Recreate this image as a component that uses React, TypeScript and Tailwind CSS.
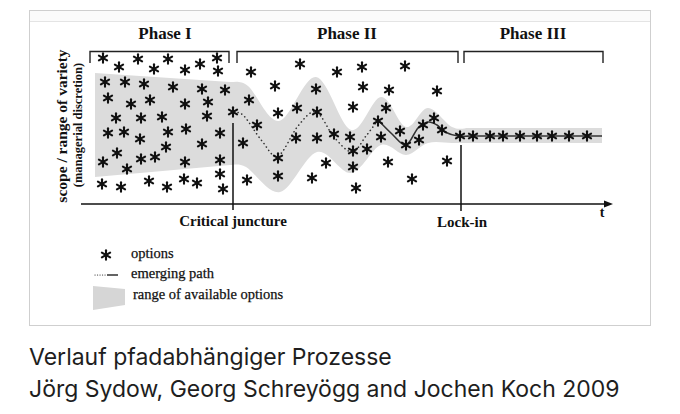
type Pt = [number, number]

// options (asterisks) scattered over the chart
const stars: Pt[] = [
  [103, 58], [119, 67], [138, 59], [154, 69], [168, 59], [185, 70], [200, 64], [217, 58], [218, 71],
  [105, 82], [125, 82], [144, 84], [173, 87], [202, 89], [225, 90],
  [108, 98], [131, 104], [150, 100], [185, 104], [208, 102],
  [116, 118], [141, 118], [162, 117], [207, 116], [233, 112],
  [108, 133], [124, 132], [140, 139], [168, 132], [186, 129], [220, 133],
  [166, 147], [202, 144],
  [117, 153], [103, 162], [127, 169], [141, 159], [155, 157], [185, 162], [220, 160],
  [220, 174],
  [102, 184], [121, 187], [149, 181], [167, 187], [184, 179], [197, 183], [223, 189],
  [251, 72], [300, 64], [337, 72], [362, 67], [405, 66],
  [275, 86], [316, 89], [363, 87], [389, 90], [437, 91],
  [249, 100], [278, 113], [297, 108], [317, 112], [353, 107], [386, 108],
  [257, 125], [378, 121], [434, 118], [423, 125], [442, 130],
  [243, 143], [296, 138], [317, 138], [334, 134], [350, 137], [381, 137], [400, 131], [406, 145], [419, 140],
  [278, 158], [326, 163], [353, 151], [367, 149], [388, 162], [353, 167], [447, 161],
  [247, 180], [278, 176], [312, 178], [356, 188], [412, 179],
  [460, 136], [473, 136], [490, 136], [503, 136], [520, 136], [537, 136], [552, 136], [569, 136], [587, 136],
]

const bandTop: Pt[] = [[230, 82], [248, 86], [279, 121], [316, 77], [351, 130], [381, 97], [406, 127], [428, 108], [452, 127], [468, 128]]
const bandBottom: Pt[] = [[468, 143], [452, 143], [428, 143], [406, 155], [381, 145], [351, 173], [317, 152], [280, 192], [246, 167], [230, 165]]
const dotted: Pt[] = [[234, 112], [244, 116], [262, 141], [278, 156], [298, 126], [316, 112], [334, 137], [352, 152], [366, 136], [378, 120]]
const solid: Pt[] = [[378, 120], [392, 134], [406, 145], [418, 128], [428, 122], [437, 125], [445, 132], [458, 136], [470, 136]]

// catmull-rom through the points, returns curve commands only
function curve(pts: Pt[]) {
  let d = ""
  for (let i = 0; i < pts.length - 1; i++) {
    const p0 = pts[i - 1] || pts[i]
    const p1 = pts[i]
    const p2 = pts[i + 1]
    const p3 = pts[i + 2] || p2
    const c1 = [p1[0] + (p2[0] - p0[0]) / 6, p1[1] + (p2[1] - p0[1]) / 6]
    const c2 = [p2[0] - (p3[0] - p1[0]) / 6, p2[1] - (p3[1] - p1[1]) / 6]
    d += ` C${c1[0]},${c1[1]} ${c2[0]},${c2[1]} ${p2[0]},${p2[1]}`
  }
  return d
}

const bandPath =
  `M95,73 L230,82` + curve(bandTop) + ` L602,128 L602,143 L468,143` + curve(bandBottom) + ` L95,177 Z`

function Star({ x, y }: { x: number; y: number }) {
  return <use href="#ast" x={x} y={y} />
}

const serif = "'Liberation Serif', 'Times New Roman', serif"

function Chart() {
  return (
    <svg width="620" height="303" viewBox="30 22 620 303" className="block">
      <defs>
        <g id="ast" stroke="#111" strokeWidth="2.1" strokeLinecap="round">
          <line x1="0" y1="-4.7" x2="0" y2="4.7" />
          <line x1="-4.1" y1="-2.35" x2="4.1" y2="2.35" />
          <line x1="-4.1" y1="2.35" x2="4.1" y2="-2.35" />
        </g>
      </defs>

      {/* phase headings */}
      <g fontFamily={serif} fontWeight="700" fontSize="17" fill="#111" textAnchor="middle">
        <text x="165" y="39">Phase I</text>
        <text x="347" y="39">Phase II</text>
        <text x="533" y="39">Phase III</text>
      </g>
      <g stroke="#222" strokeWidth="1.4" fill="none">
        <path d="M90,63 V51.5 H229 V63" />
        <path d="M237,63 V51.5 H458 V63" />
        <path d="M464,63 V51.5 H603 V63" />
      </g>

      {/* y label */}
      <g fontFamily={serif} fontWeight="700" fill="#111" textAnchor="middle">
        <text fontSize="15.5" transform="translate(67,126) rotate(-90)">scope / range of variety</text>
        <text fontSize="12.5" transform="translate(82,125) rotate(-90)">(managerial discretion)</text>
      </g>

      {/* range of options */}
      <path d={bandPath} fill="#dcdcdc" />

      {/* emerging path */}
      <path d={"M234,112" + curve(dotted)} fill="none" stroke="#333" strokeWidth="1.6" strokeDasharray="0.1 4" strokeLinecap="round" />
      <path d={"M378,120" + curve(solid) + " L602,136"} fill="none" stroke="#333" strokeWidth="1.6" />

      {stars.map(([x, y], i) => (
        <Star key={i} x={x} y={y} />
      ))}

      {/* axis and markers */}
      <g stroke="#111" strokeWidth="1.5">
        <line x1="81" y1="204" x2="608" y2="204" />
        <line x1="233" y1="123" x2="233" y2="210" />
        <line x1="461" y1="145" x2="461" y2="211" />
      </g>
      <path d="M613,204 L604,200.5 L604,207.5 Z" fill="#111" />
      <g fontFamily={serif} fontWeight="700" fill="#111" textAnchor="middle">
        <text x="602" y="217" fontSize="14">t</text>
        <text x="233" y="226" fontSize="15">Critical juncture</text>
        <text x="462" y="227" fontSize="15">Lock-in</text>
      </g>

      {/* legend */}
      <Star x={106} y={255} />
      <line x1="95" y1="275" x2="107" y2="275" stroke="#333" strokeWidth="1.2" strokeDasharray="0.1 2.4" strokeLinecap="round" />
      <line x1="107" y1="275" x2="118" y2="275" stroke="#222" strokeWidth="1.4" />
      <path d="M93,286 L125,289 L125,305 L93,310 Z" fill="#d6d6d6" />
      <g fontFamily={serif} fontSize="14.5" fill="#111" stroke="#111" strokeWidth="0.25">
        <text x="131" y="258">options</text>
        <text x="131" y="278">emerging path</text>
        <text x="133" y="299">range of available options</text>
      </g>
    </svg>
  )
}

export default function App() {
  return (
    <div className="min-h-[414px] w-[680px] bg-white pl-[29px] pt-[10px]">
      <div className="w-[622px] h-[316px] border border-[#cfcfcf] bg-white">
        <div className="h-[11px] border-b border-[#e4e4e4] bg-[#fbfbfb]" />
        <Chart />
      </div>
      <div className="mt-[15px] font-['Inter',sans-serif] text-[23px] leading-[32px] text-[#1e1e1e]">
        <p>Verlauf pfadabhängiger Prozesse</p>
        <p>Jörg Sydow, Georg Schreyögg and Jochen Koch 2009</p>
      </div>
    </div>
  )
}
